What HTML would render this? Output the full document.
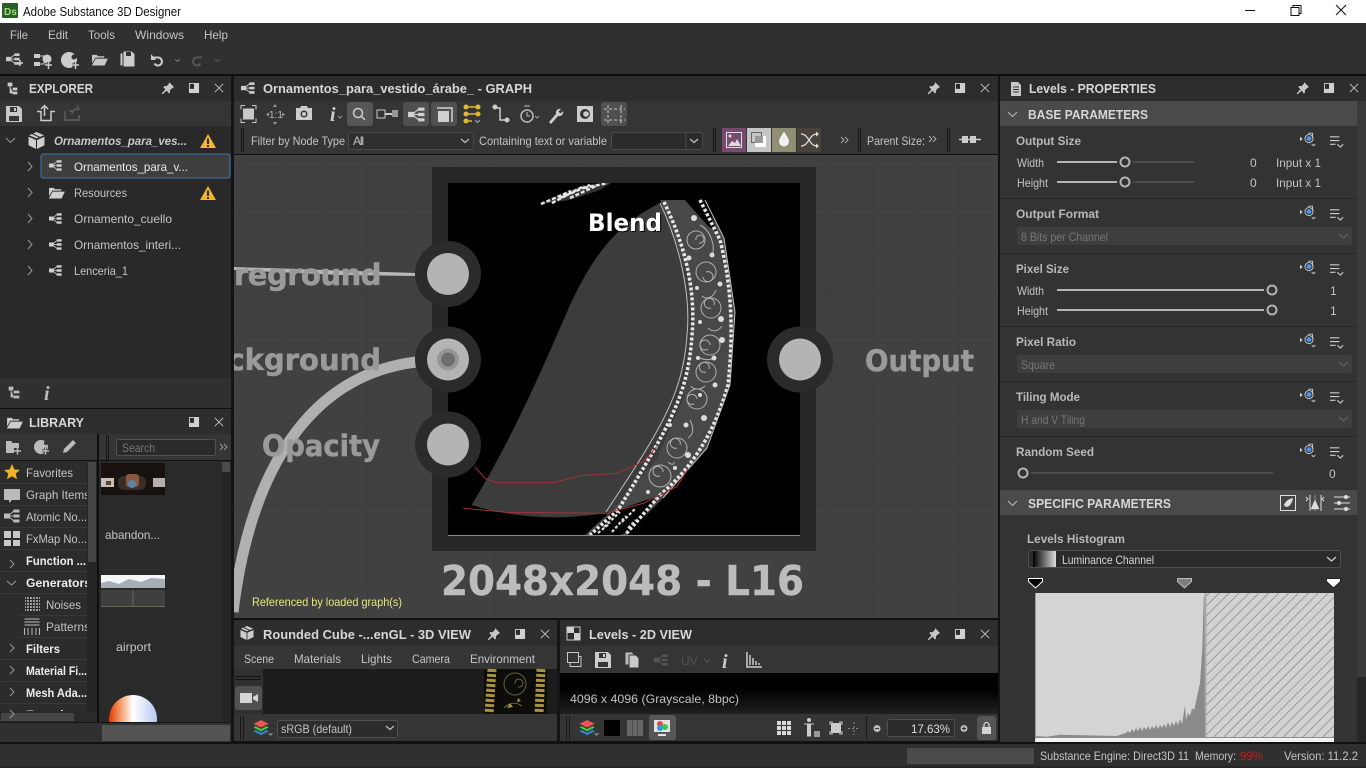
<!DOCTYPE html>
<html><head><meta charset="utf-8"><title>Adobe Substance 3D Designer</title>
<style>
html,body{margin:0;padding:0;background:#2d2d2d;width:1366px;height:768px;overflow:hidden}
svg{display:block;position:absolute;left:0;top:0}
text{font-family:"Liberation Sans",sans-serif;font-size:12px;fill:#c4c4c4;white-space:pre}
.b{font-weight:bold}
.h{font-weight:bold;font-size:13px;fill:#d6d6d6}
.l{font-weight:bold;fill:#b9b9b9}
.d{fill:#767676}
.big{font-family:"DejaVu Sans",sans-serif;font-weight:bold;fill:#9a9a9a}
.i{color:#c8c8c8}
</style></head><body>
<svg width="1366" height="768" viewBox="0 0 1366 768" xmlns="http://www.w3.org/2000/svg">
<defs>
<symbol id="graph" viewBox="0 0 16 16"><path fill="currentColor" d="M0 5.500h6v5H0zM9.500 1.500h6v3h-6zM9.500 6.500h6v3h-6zM9.500 11.500h6v3h-6z"/><path stroke="currentColor" fill="none" d="M5 7L10 3M5 8h5M5 9l5 4"/></symbol>
<symbol id="pin" viewBox="0 0 16 16"><path fill="currentColor" d="M9 1l6 6-2 .8-3 3 .3 2.500-1.300 1L6.500 11 2 15l-1 0 0-1 4-4.500L2.700 7l1-1.300 2.500.3 3-3z"/></symbol>
<symbol id="max" viewBox="0 0 12 12"><path fill="#2b2b2b" stroke="#d0d0d0" d="M1 1h10v10H1z"/><path fill="#d0d0d0" d="M1 1h10v4H6v6H1z" transform="rotate(180 6 6)"/></symbol>
<symbol id="x" viewBox="0 0 12 12"><path stroke="currentColor" fill="none" d="M1 1l10 10M11 1L1 11"/></symbol>
<symbol id="folder" viewBox="0 0 18 14"><path fill="currentColor" d="M1 2h5l1.500 1.500H14V5H4.500L1 11zM4.900 6H18l-3.500 7.500H.8z"/></symbol>
<symbol id="warn" viewBox="0 0 16 14"><path fill="#f4b62a" d="M8 0l8 14H0z"/><path fill="#2a2a2a" d="M7 4.500h2V10H7zM7 11h2v2H7z"/></symbol>
<symbol id="save" viewBox="0 0 16 16"><path fill="currentColor" fill-rule="evenodd" d="M0 0h13l3 3v13H0zM4 1v5h7V1zM3 10v5h10v-5z"/><path fill="currentColor" d="M8 2h2v3H8z"/></symbol>
<symbol id="cube" viewBox="0 0 16 16"><path fill="currentColor" d="M8 0l7 3-7 3-7-3zM.5 4.500l7 3V16l-7-3.500zM15.500 4.500v8L8.500 16V7.500z"/><path stroke="#282828" d="M4 1.500l7 3.500"/></symbol>
<symbol id="set" viewBox="0 0 20 16"><path fill="currentColor" d="M0 5l3 2.500L0 10z"/><circle cx="10" cy="7" r="4.500" fill="none" stroke="#ccc"/><circle cx="10" cy="7" r="2.800" fill="#4b93e6"/><path stroke="#ccc" fill="none" d="M9 1h5v5M13 13l2 2 2-2"/></symbol>
<symbol id="lines" viewBox="0 0 16 16"><path stroke="currentColor" fill="none" stroke-width="1.200" d="M0 3h10M0 7h10M0 11h6M8 11l3 3 3-3"/></symbol>
<symbol id="layers" viewBox="0 0 20 18"><path fill="#e55" d="M8 0l8 4-8 4-8-4z"/><path fill="#4c4" d="M2 6.500L8 9.500l6-3 2 1.500-8 4-8-4z"/><path fill="#38c" d="M2 10.500l6 3 6-3 2 1.500-8 4-8-4z"/><path stroke="#aaa" fill="none" d="M16 14l2 2 2-2"/></symbol>
<pattern id="hatch" width="7" height="7" patternUnits="userSpaceOnUse" patternTransform="rotate(45)"><rect width="7" height="7" fill="#d2d2d2"/><rect width="1" height="7" fill="#9a9a9a"/></pattern>
<pattern id="grid" width="42.200" height="42.200" patternUnits="userSpaceOnUse" x="-12" y="-1"><rect width="42.200" height="42.200" fill="#414141"/><path d="M42 0v42.200M0 42h42.200" stroke="#3b3b3b"/></pattern>
<linearGradient id="g2d" x1="0" y1="0" x2="0" y2="1"><stop offset="0" stop-color="#000"/><stop offset=".4" stop-color="#000"/><stop offset="1" stop-color="#202020"/></linearGradient>
<linearGradient id="lum" x1="0" y1="0" x2="1" y2="0"><stop offset="0" stop-color="#000"/><stop offset="1" stop-color="#ddd"/></linearGradient>
<linearGradient id="sph" x1="0" y1="0" x2="1" y2="0"><stop offset="0" stop-color="#e03a00"/><stop offset=".25" stop-color="#f5a070"/><stop offset=".5" stop-color="#fff"/><stop offset="1" stop-color="#b8c8f0"/></linearGradient>
<clipPath id="cg"><rect x="234" y="155" width="764" height="463"/></clipPath>
<clipPath id="ci"><rect x="448" y="183" width="352" height="352"/></clipPath>
<clipPath id="cl"><rect x="0" y="461" width="87" height="250"/></clipPath>
<clipPath id="cs"><rect x="100" y="690" width="70" height="32"/></clipPath>
</defs>

<!-- base -->
<rect width="1366" height="768" fill="#2e2e2e"/>
<rect width="1366" height="23" fill="#fff"/>
<rect x="2" y="3" width="16" height="15" rx="1" fill="#2b5d2a"/>
<text x="4" y="15" style="font-size:10px;font-weight:bold;fill:#9fe07a">Ds</text>
<text x="23" y="16" textLength="158" lengthAdjust="spacingAndGlyphs" style="font-size:13px;fill:#111">Adobe Substance 3D Designer</text>
<path d="M1245 10.500h10" stroke="#111"/>
<path d="M1291 7.500h8v8h-8zM1293 7.500v-2h8v8h-2" fill="#fff" stroke="#111"/>
<path d="M1336 5l10 10M1346 5l-10 10" stroke="#111"/>

<rect y="23" width="1366" height="51" fill="#303030"/>
<rect y="74" width="1366" height="2" fill="#0e0e0e"/>
<g>
<text x="10" y="39" textLength="18" lengthAdjust="spacingAndGlyphs">File</text><text x="48" y="39" textLength="20" lengthAdjust="spacingAndGlyphs">Edit</text><text x="88" y="39" textLength="27" lengthAdjust="spacingAndGlyphs">Tools</text><text x="135" y="39" textLength="49" lengthAdjust="spacingAndGlyphs">Windows</text><text x="204" y="39" textLength="24" lengthAdjust="spacingAndGlyphs">Help</text>
</g>
<g class="i">
<use href="#graph" x="6" y="52" width="14" height="14"/><path d="M17 63h6M20 60v6" stroke="#ccc" stroke-width="1.500"/>
<path d="M34 54h6v4h-6zM34 62h6v4h-6z" fill="#ccc"/><path d="M40 56h4v8h-4" fill="none" stroke="#ccc"/><circle cx="47" cy="59" r="4.500" fill="#ccc"/><path d="M45 65h7M48.500 62v7" stroke="#303030" stroke-width="3"/><path d="M45 65h7M48.500 62v7" stroke="#ccc" stroke-width="1.500"/>
<circle cx="69" cy="60" r="8" fill="#ccc"/><circle cx="74" cy="57" r="2.500" fill="#303030"/><path d="M72 65h7M75.500 62v7" stroke="#303030" stroke-width="3"/><path d="M72 65h7M75.500 62v7" stroke="#ccc" stroke-width="1.500"/>
<use href="#folder" x="91" y="53" width="17" height="13"/>
<path d="M120 53h9l2 2v11h-11z" fill="#ccc" stroke="#303030"/><path d="M123 51h9l3 3v13h-12z" fill="#ccc" stroke="#303030"/><path d="M126 52h5v4h-5z" fill="#303030"/>
<path d="M152 57.500h6a4 4 0 1 1-3.500 6" fill="none" stroke="#ccc" stroke-width="2"/><path d="M151 54v6h5z" fill="#ccc"/>
<path d="M175 59l2.500 2.500 2.500-2.500" fill="none" stroke="#777"/>
<path d="M202 57.500h-5a4 4 0 1 0 3.500 6" fill="none" stroke="#555" stroke-width="2"/>
<path d="M215 59l2.500 2.500 2.500-2.500" fill="none" stroke="#555"/>
</g>

<!-- Explorer -->
<rect x="0" y="76" width="231" height="25" fill="#2d2d2d"/>
<rect x="0" y="101" width="231" height="25" fill="#353535"/>
<rect x="0" y="126" width="231" height="252" fill="#292929"/>
<rect x="231" y="76" width="3" height="667" fill="#141414"/>
<path d="M8 83h4v3H8zM13 88h4v2h-4zM13 92h4v2h-4zM10 86v7h3" fill="#ccc" stroke="#ccc" stroke-width=".7"/>
<text x="29" y="93" class="h" textLength="64" lengthAdjust="spacingAndGlyphs">EXPLORER</text>
<g class="i"><use href="#pin" x="161" y="81" width="14" height="14"/><use href="#max" x="188.500" y="82.500" width="11" height="11"/><use href="#x" x="214" y="83" width="10" height="10"/></g>
<g class="i"><use href="#save" x="6" y="106" width="16" height="16"/></g>
<path d="M37 112h4v9h10v-9h4" fill="none" stroke="#ccc" stroke-width="1.500" transform="translate(0 -.5)"/><path d="M44.500 116v-9M41 109l3.500-3.500 3.500 3.500" fill="none" stroke="#ccc" stroke-width="1.500"/>
<path d="M65 111v9h14v-5M69 111h5" fill="none" stroke="#555" stroke-width="2"/><path d="M72 114a5 5 0 0 1 6-5M77 105l2 4-4 1" fill="none" stroke="#555" stroke-width="1.500"/>
<path d="M6 138l4.500 4.500L15 138" fill="none" stroke="#999"/>
<use href="#cube" x="28" y="132" width="17" height="17" color="#cfcfcf"/>
<text x="54" y="145" textLength="133" lengthAdjust="spacingAndGlyphs" style="font-weight:bold;font-style:italic;fill:#c8c8c8">Ornamentos_para_ves...</text>
<use href="#warn" x="200" y="134" width="16" height="14"/>
<rect x="41" y="154" width="189" height="24" rx="2" fill="#3e3e3e" stroke="#3a78b0"/>
<g fill="none" stroke="#999"><path d="M28 162l4 4.500-4 4.500M28 188l4 4.500-4 4.500M28 214l4 4.500-4 4.500M28 240l4 4.500-4 4.500M28 266l4 4.500-4 4.500"/></g>
<g color="#cfcfcf"><use href="#graph" x="49" y="159" width="13" height="13"/><use href="#folder" x="48" y="186" width="17" height="13"/><use href="#graph" x="49" y="212" width="13" height="13"/><use href="#graph" x="49" y="238" width="13" height="13"/><use href="#graph" x="49" y="264" width="13" height="13"/></g>
<text x="74" y="171" textLength="114" lengthAdjust="spacingAndGlyphs" style="fill:#ececec">Ornamentos_para_v...</text>
<text x="74" y="197" textLength="53" lengthAdjust="spacingAndGlyphs">Resources</text>
<use href="#warn" x="200" y="186" width="16" height="14"/>
<text x="74" y="223" textLength="98" lengthAdjust="spacingAndGlyphs">Ornamento_cuello</text>
<text x="74" y="249" textLength="107" lengthAdjust="spacingAndGlyphs">Ornamentos_interi...</text>
<text x="74" y="275" textLength="54" lengthAdjust="spacingAndGlyphs">Lenceria_1</text>

<rect x="0" y="378" width="231" height="30" fill="#303030"/>
<rect x="0" y="408" width="231" height="1" fill="#0e0e0e"/>
<path d="M9 387h4v3H9zM14 391h5v2h-5zM14 396h5v2h-5zM11 390v7h3" fill="#bbb" stroke="#bbb" stroke-width=".7"/>
<text x="44" y="400" style="font-family:'Liberation Serif',serif;font-style:italic;font-weight:bold;font-size:20px;fill:#bbb">i</text>

<!-- Library -->
<rect x="0" y="409" width="231" height="25" fill="#2d2d2d"/>
<rect x="0" y="434" width="231" height="27" fill="#353535"/>
<use href="#folder" x="6" y="416" width="17" height="13" color="#ccc"/>
<text x="29" y="427" class="h" textLength="55" lengthAdjust="spacingAndGlyphs">LIBRARY</text>
<g class="i"><use href="#max" x="188.500" y="416.500" width="11" height="11"/><use href="#x" x="214" y="417" width="10" height="10"/></g>
<path d="M6 441h5l1.500 2H19v5h-5v5H6z" fill="#bbb"/><path d="M14 451h7M17.500 447.500v7" stroke="#bbb" stroke-width="1.500"/>
<circle cx="41" cy="447" r="7" fill="#bbb"/><circle cx="46" cy="443" r="2" fill="#353535"/><path d="M42 451h7M45.500 447.500v7" stroke="#353535" stroke-width="3"/><path d="M42 451h7M45.500 447.500v7" stroke="#bbb" stroke-width="1.500"/>
<path d="M63 453l1-4 9-9 3 3-9 9z" fill="#bbb"/>
<rect x="97" y="434" width="2" height="27" fill="#0f0f0f"/>
<path d="M106.500 435v25M108.500 435v25" stroke="#151515"/>
<rect x="116.500" y="439.500" width="99" height="16" rx="2" fill="#2a2a2a" stroke="#505050"/>
<text x="122" y="452" textLength="33" lengthAdjust="spacingAndGlyphs" class="d">Search</text>
<path d="M220 444l3 3-3 3M224 444l3 3-3 3" fill="none" stroke="#999"/>
<rect x="0" y="460" width="231" height="1" fill="#111"/>
<rect x="0" y="461" width="97" height="261" fill="#2c2c2c"/>
<rect x="99" y="461" width="132" height="261" fill="#2a2a2a"/>
<rect x="97" y="461" width="2" height="261" fill="#0f0f0f"/>
<rect x="87" y="461" width="10" height="261" fill="#252525"/>
<rect x="88" y="462" width="8" height="100" fill="#454545"/>
<rect x="0" y="711" width="97" height="11" fill="#2a2a2a"/>
<rect x="1" y="713" width="73" height="8" fill="#454545"/>
<g stroke="#383838"><path d="M0 483.500h87M0 505.500h87M0 527.500h87M0 549.500h87M0 571.500h87M0 593.500h87M20 615.500h67M20 637.500h67M0 659.500h87M0 681.500h87M0 703.500h87"/></g>
<path d="M12 464l2.300 5.400 5.700.5-4.300 3.700 1.300 5.600-5-3-5 3 1.300-5.600L4 470l5.700-.5z" fill="#f0b429"/>
<path d="M5 489h14a1 1 0 0 1 1 1v9a1 1 0 0 1-1 1h-7l-3 3v-3H5a1 1 0 0 1-1-1v-9a1 1 0 0 1 1-1z" fill="#bbb"/>
<use href="#graph" x="4" y="508" width="16" height="16" color="#bbb"/>
<path d="M4 531h7v7H4zM13 531h7v7h-7zM4 540h7v6H4zM13 540h7v6h-7z" fill="#c8c8c8"/>
<path d="M10 562l4 4-4 4M7 583l4.500 4 4.500-4M10 646l4 4-4 4M10 668l4 4-4 4M10 690l4 4-4 4M10 712l4 4-4 4" transform="translate(0 -2)" fill="none" stroke="#999"/>
<g stroke="#9a9a9a" stroke-width="2" stroke-dasharray="2 1"><path d="M25 598h15M25 601h15M25 604h15M25 607h15M25 610h15" stroke-dashoffset="1"/></g>
<path d="M24.500 619h15M24.500 622h15M24.500 625h15M24.500 628v7M28 628v7M32 628v7M36 628v7M39.500 628v7" stroke="#bbb"/>
<g clip-path="url(#cl)">
<text x="26" y="477" textLength="47" lengthAdjust="spacingAndGlyphs">Favorites</text>
<text x="26" y="499" textLength="64" lengthAdjust="spacingAndGlyphs">Graph Items</text>
<text x="26" y="521" textLength="61" lengthAdjust="spacingAndGlyphs">Atomic No...</text>
<text x="26" y="543" textLength="61" lengthAdjust="spacingAndGlyphs">FxMap No...</text>
<text x="26" y="565" textLength="60" lengthAdjust="spacingAndGlyphs" style="font-weight:bold;fill:#eee">Function ...</text>
<text x="26" y="587" textLength="65" lengthAdjust="spacingAndGlyphs" style="font-weight:bold;fill:#eee">Generators</text>
<text x="46" y="609" textLength="35" lengthAdjust="spacingAndGlyphs">Noises</text>
<text x="46" y="631" textLength="44" lengthAdjust="spacingAndGlyphs">Patterns</text>
<text x="26" y="653" textLength="34" lengthAdjust="spacingAndGlyphs" style="font-weight:bold;fill:#eee">Filters</text>
<text x="26" y="675" textLength="61" lengthAdjust="spacingAndGlyphs" style="font-weight:bold;fill:#eee">Material Fi...</text>
<text x="26" y="697" textLength="61" lengthAdjust="spacingAndGlyphs" style="font-weight:bold;fill:#eee">Mesh Ada...</text>
<text x="26" y="719" textLength="60" lengthAdjust="spacingAndGlyphs" style="font-weight:bold;fill:#eee">Functions</text>
</g>
<rect x="101" y="463" width="64" height="32" fill="#17120f"/>
<rect x="101" y="478" width="13" height="9" fill="#c8c0b8"/><rect x="153" y="478" width="12" height="9" fill="#b8b0a8"/><rect x="118" y="476" width="28" height="14" rx="6" fill="#3a2c26"/><rect x="126" y="474" width="13" height="13" rx="3" fill="#8a5a40"/><circle cx="132" cy="484" r="4" fill="#5a86a8"/><rect x="106" y="481" width="5" height="4" fill="#5a4238"/>
<text x="105" y="539" textLength="55" lengthAdjust="spacingAndGlyphs">abandon...</text>
<rect x="101" y="575" width="64" height="13" fill="#f4f5f6"/><path d="M101 583l8-2 10 3 10-5 12 3 10-4 14 1v9h-64z" fill="#a9aeb4"/><rect x="101" y="590" width="64" height="17" fill="#3f3f3e"/><path d="M133 590v17" stroke="#666"/><path d="M101 606.500h64" stroke="#6a6a50"/>
<text x="116" y="651" textLength="35" lengthAdjust="spacingAndGlyphs">airport</text>
<circle cx="133" cy="719" r="24" fill="url(#sph)" clip-path="url(#cs)"/>
<rect x="222" y="461" width="9" height="261" fill="#262626"/><rect x="222" y="462" width="8" height="10" fill="#4a4a4a"/>
<rect x="0" y="722" width="231" height="21" fill="#303030"/>
<rect x="0" y="722" width="231" height="1" fill="#161616"/>
<rect x="102" y="725" width="128" height="16" fill="#545454"/>
<rect x="0" y="742" width="1366" height="2" fill="#111"/>
<rect x="0" y="744" width="1366" height="24" fill="#2f2f2f"/>
<rect x="907" y="748" width="127" height="16" fill="#4a4a4a"/>
<rect x="0" y="766" width="1366" height="2" fill="#242424"/>
<text x="1040" y="760" textLength="149" lengthAdjust="spacingAndGlyphs">Substance Engine: Direct3D 11</text>
<text x="1195" y="760" textLength="41" lengthAdjust="spacingAndGlyphs">Memory:</text>
<text x="1240" y="760" textLength="23" lengthAdjust="spacingAndGlyphs" style="fill:#c81c1c">99%</text>
<text x="1284" y="760" textLength="74" lengthAdjust="spacingAndGlyphs">Version: 11.2.2</text>

<!-- Graph panel -->
<rect x="234" y="76" width="764" height="25" fill="#2d2d2d"/>
<rect x="234" y="101" width="764" height="26" fill="#353535"/>
<rect x="234" y="127" width="764" height="27" fill="#353535"/>
<rect x="234" y="154" width="764" height="1" fill="#111"/>
<rect x="998" y="76" width="2" height="667" fill="#131313"/>
<use href="#graph" x="241" y="81" width="14" height="14" color="#ccc"/>
<text x="263" y="93" class="h" textLength="269" lengthAdjust="spacingAndGlyphs">Ornamentos_para_vestido_árabe_ - GRAPH</text>
<g class="i"><use href="#pin" x="927" y="81" width="14" height="14"/><use href="#max" x="954.500" y="82.500" width="11" height="11"/><use href="#x" x="980" y="83" width="10" height="10"/></g>
<rect x="347" y="102" width="26" height="24" rx="3" fill="#565656"/>
<rect x="403" y="102" width="26" height="24" rx="3" fill="#505050"/>
<rect x="431" y="102" width="26" height="24" rx="3" fill="#505050"/>
<rect x="601" y="102" width="26" height="24" rx="3" fill="#505050"/>
<rect x="243" y="108.500" width="11" height="11" fill="#c8c8c8"/><path d="M241 110v-4h4M252 106h4v4M256 119v4h-4M245 123h-4v-4" transform="translate(0 -.5)" fill="none" stroke="#c8c8c8"/>
<text x="269" y="118" style="font-size:10px;fill:#bbb">1:1</text><path d="M275 104l2 3h-4zM275 125l2-3h-4zM266 114.500l3-2v4zM285 114.500l-3-2v4z" fill="#999"/>
<path d="M296 108h4l1-2h6l1 2h4v12h-16z" fill="#ccc"/><circle cx="304" cy="114" r="3.500" fill="#353535"/><circle cx="304" cy="114" r="2" fill="#ccc"/>
<text x="330" y="121" style="font-family:'Liberation Serif',serif;font-style:italic;font-weight:bold;font-size:20px;fill:#ccc">i</text><path d="M338 116l2 2 2-2" stroke="#999" fill="none"/>
<circle cx="358" cy="113" r="4.500" fill="none" stroke="#ccc" stroke-width="1.500"/><path d="M361 116l4 4" stroke="#ccc" stroke-width="1.500"/>
<path d="M377 110h8v8h-8z" fill="none" stroke="#ccc"/><path d="M385 114h7" stroke="#ccc" stroke-width="2"/><rect x="392" y="110" width="6" height="7" fill="#999"/>
<use href="#graph" x="408" y="106" width="17" height="17" color="#d0d0d0"/>
<path d="M437 108h15v14" fill="none" stroke="#d0d0d0" stroke-width="1.500"/><rect x="438" y="111" width="11" height="11" fill="#d0d0d0"/>
<path d="M466 107h12M466 114h12M466 121h6" stroke="#e0b732" stroke-width="1.500"/><circle cx="466" cy="107" r="2.500" fill="#e0b732"/><circle cx="478" cy="107" r="2.500" fill="#e0b732"/><circle cx="466" cy="114" r="2.500" fill="#e0b732"/><circle cx="478" cy="114" r="2.500" fill="#e0b732"/><circle cx="466" cy="121" r="2.500" fill="#e0b732"/><path d="M475 120l2.500 2.500 2.500-2.500" stroke="#aaa" fill="none"/>
<path d="M495 108h5v12h7" fill="none" stroke="#ccc" stroke-width="1.500"/><circle cx="495" cy="107" r="2.500" fill="#ccc"/><circle cx="507" cy="120" r="2.500" fill="#ccc"/>
<circle cx="527" cy="116" r="6" fill="none" stroke="#bbb" stroke-width="1.500"/><path d="M524 106h6M527 112v4h3" stroke="#bbb" fill="none"/><path d="M535 116l2 2 2-2" stroke="#999" fill="none"/>
<path d="M549 122l7-8a4 4 0 0 1 5-5l-2.500 2.500 2 2 2.500-2.500a4 4 0 0 1-5 5l-7 8z" fill="#ccc"/>
<rect x="577" y="106" width="16" height="16" fill="#ccc"/><rect x="580" y="109" width="10" height="10" rx="5" fill="#333"/><circle cx="586" cy="114" r="2.800" fill="#ccc"/>
<path d="M604 109h21M604 120h21M608 105v19M621 105v19" fill="none" stroke="#c4c4c4" stroke-dasharray="3 2"/>

<path d="M241.500 128v24M243.500 128v24" stroke="#161616"/>
<text x="251" y="145" textLength="94" lengthAdjust="spacingAndGlyphs">Filter by Node Type</text>
<rect x="348.500" y="132.500" width="125" height="17" rx="2" fill="#2f2f2f" stroke="#4a4a4a"/>
<text x="353" y="145" textLength="11">All</text>
<path d="M461 139l4 3.500 4-3.500" fill="none" stroke="#bbb" stroke-width="1.300"/>
<text x="479" y="145" textLength="128" lengthAdjust="spacingAndGlyphs">Containing text or variable</text>
<rect x="611.500" y="132.500" width="91" height="17" rx="2" fill="#2b2b2b" stroke="#4a4a4a"/>
<path d="M686 133v16" stroke="#4a4a4a"/><path d="M690 139l4 3.500 4-3.500" fill="none" stroke="#bbb" stroke-width="1.300"/>
<path d="M713.500 128v24M715.500 128v24" stroke="#161616"/>
<rect x="722" y="128" width="24" height="24" fill="#754c70"/><rect x="747" y="128" width="24" height="24" fill="#c6c6c6"/><rect x="772" y="128" width="24" height="24" fill="#8f8d72"/><rect x="797" y="128" width="24" height="24" fill="#48423a"/>
<path d="M726.500 132.500h15v15h-15z" fill="none" stroke="#ddd"/><path d="M728 146l4-5 3 2 2-4 4 7z" fill="#ddd"/><circle cx="730" cy="136" r="1.500" fill="#ddd"/>
<path d="M751.500 132.500h10v10h-10z" fill="#c6c6c6" stroke="#666"/><rect x="755" y="136" width="11" height="11" fill="#fff"/><rect x="755" y="136" width="8" height="7" fill="#999"/>
<path d="M784 131.500c3 5 5 7 5 10a5 5 0 0 1-10 0c0-3 2-5 5-10z" fill="#f0f0f0"/>
<path d="M801 134c8 0 8 12 16 12M801 146c8 0 8-12 16-12" fill="none" stroke="#ddd" stroke-width="1.200"/><path d="M816 131.500l3 2.500-3 2.500zM816 143.500l3 2.500-3 2.500z" fill="#ddd"/>
<path d="M841 137l3 3-3 3M845 137l3 3-3 3" fill="none" stroke="#aaa"/>
<path d="M858.500 128v24M860.500 128v24" stroke="#161616"/>
<text x="867" y="145" textLength="58" lengthAdjust="spacingAndGlyphs">Parent Size:</text>
<path d="M929 136l3 3-3 3M933 136l3 3-3 3" fill="none" stroke="#aaa"/>
<path d="M947.500 128v24M949.500 128v24" stroke="#161616"/>
<rect x="962" y="136" width="6" height="7" fill="#ccc"/><rect x="970" y="136" width="6" height="7" fill="#ccc"/><path d="M959 139.500h22" stroke="#ccc" stroke-width="1.500"/>

<!-- Graph canvas -->
<g clip-path="url(#cg)">
<rect x="234" y="155" width="764" height="463" fill="url(#grid)"/>
<path d="M234 267L340 270.500 416 273v3L340 275 234 270z" fill="#b8b8b8"/>
<path d="M233 612C250 470 310 375 416 362" fill="none" stroke="#b0b0b0" stroke-width="11"/>
<text x="381" y="285" text-anchor="end" class="big" style="font-size:29px;letter-spacing:-.5px;stroke:#9a9a9a;stroke-width:.5px">Foreground</text>
<text x="381" y="370" text-anchor="end" class="big" style="font-size:29px;stroke:#9a9a9a;stroke-width:.5px">Background</text>
<text x="262" y="456" textLength="118" lengthAdjust="spacingAndGlyphs" class="big" style="font-size:29px;stroke:#9a9a9a;stroke-width:.5px">Opacity</text>
<text x="865" y="371" textLength="109" lengthAdjust="spacingAndGlyphs" class="big" style="font-size:29px;stroke:#9a9a9a;stroke-width:.5px">Output</text>
<rect x="432" y="167" width="384" height="384" fill="#272727"/>
<rect x="448" y="183" width="352" height="352" fill="#000"/>
<g clip-path="url(#ci)">
<path d="M471.500 505C505 450 530 398 570 305 592 258 615 225 660 203L687 260 692 325 683 398 657 458 610 512C560 522 510 517 471.500 505z" fill="#3c3c3c"/>
<path d="M660 200H703L724 238 735 312 730 385 707 448 663 498 627 535H585L610 512 657 458 683 398 692 325 687 272z" fill="#484848"/>
<path d="M684 199H706L717 232 708 226z" fill="#000"/>
<path d="M612 512L655 497 640 528 620 535H590z" fill="#050505"/>
<g fill="none" stroke="#e8e8e8" stroke-width="3.500" stroke-dasharray="3 2">
<path d="M664 202C685 245 696 290 692 335 688 395 670 425 618 510L590 535"/>
<path d="M700 200L720 240C733 290 733 340 728 385 715 430 695 465 660 495L625 535"/>
</g>
<g fill="none" stroke="#bdbdbd" stroke-width="1">
<path d="M660 203C680 245 691 295 687 335 683 395 660 430 606 512"/>
<path d="M705 200L724 238 735 312 730 385 707 448 663 498"/>
</g>
<g fill="none" stroke="#b0b0b0" stroke-width="1">
<circle cx="696" cy="240" r="9"/><circle cx="706" cy="272" r="10"/><circle cx="711" cy="308" r="10"/><circle cx="710" cy="345" r="10"/><circle cx="706" cy="372" r="10"/><circle cx="697" cy="399" r="10"/><circle cx="677" cy="448" r="10"/><circle cx="660" cy="476" r="11"/>
<path d="M696 240a4 4 0 1 1 3 3M706 272a5 5 0 1 1-3 5M711 308a5 5 0 1 1 3-3M710 345a5 5 0 1 0-2 4M706 372a5 5 0 1 1 3-3M697 399a5 5 0 1 0-3 5M677 448a5 5 0 1 1 3-3M660 476a5 5 0 1 1 3-4"/>
<path d="M700 225c10 5 16 20 12 32M716 290c-3 8-10 10-14 6M722 326c-4 6-10 6-14 2M716 358c-6 2-12 2-16 0M705 386c-4 4-12 4-14 0M690 420c4 8 4 14-2 18M668 462c2 2 6 4 6 0"/>
</g>
<g fill="#dcdcdc"><circle cx="689" cy="258" r="2.500"/><circle cx="720" cy="284" r="2.500"/><circle cx="721" cy="319" r="3"/><circle cx="714" cy="358" r="2.500"/><circle cx="722" cy="340" r="3"/><circle cx="704" cy="418" r="3"/><circle cx="686" cy="425" r="2.500"/><circle cx="700" cy="395" r="2"/><circle cx="688" cy="455" r="3"/><circle cx="670" cy="425" r="2"/><circle cx="712" cy="255" r="2.500"/><circle cx="697" cy="288" r="2"/><circle cx="700" cy="322" r="2"/><circle cx="698" cy="358" r="2"/><circle cx="715" cy="385" r="2.500"/><circle cx="675" cy="468" r="2"/><circle cx="648" cy="492" r="2"/><circle cx="694" cy="218" r="3"/></g>
<path d="M541 204L570 190 590 184 611 183 600 190 570 200z" fill="#333"/>
<path d="M541 204l30-13M552 203l32-17M570 198l28-13M584 188l24-5M560 198l30-13" stroke="#e4e4e4" stroke-width="2.500" stroke-dasharray="4 2" fill="none"/>
<path d="M598 533l12-10M612 532l14-16M628 528l8-8M604 527l16-15M622 522l14-14" stroke="#ddd" stroke-width="2.200" stroke-dasharray="3 2" fill="none"/>
<path d="M475 466.700L485 478.300 496.700 482.700H553.300L580 475.700 616.700 473.300 643.300 461.700 656.700 446.700" fill="none" stroke="#a33236"/>
<path d="M463.300 508.300L506.700 512.300 606.700 513.300 643.300 503.300 676.700 486.700 688.300 468.300" fill="none" stroke="#a33236"/>
</g>
<path d="M448 535.500h352" stroke="#8a8a8a"/>
<text x="589" y="232" textLength="74" lengthAdjust="spacingAndGlyphs" class="big" style="font-size:24px;fill:#000">Blend</text>
<text x="588" y="231" textLength="74" lengthAdjust="spacingAndGlyphs" class="big" style="font-size:24px;fill:#fff">Blend</text>
<g fill="#2b2b2b"><circle cx="448" cy="274" r="33"/><circle cx="448" cy="359.500" r="33"/><circle cx="448" cy="444.500" r="33"/><circle cx="800" cy="359.500" r="33"/></g>
<g fill="#b4b4b4"><circle cx="448" cy="274" r="21"/><circle cx="448" cy="359.500" r="21"/><circle cx="448" cy="444.500" r="21"/><circle cx="800" cy="359.500" r="21"/></g>
<circle cx="448" cy="359.500" r="11" fill="#969696"/><circle cx="448" cy="359.500" r="7" fill="#6e6e6e"/>
<text x="441" y="595" textLength="363" lengthAdjust="spacingAndGlyphs" class="big" style="font-size:41px;fill:#bcbcbc;stroke:#bcbcbc;stroke-width:.4px">2048x2048 - L16</text>
<text x="252" y="606" textLength="150" lengthAdjust="spacingAndGlyphs" style="fill:#e6e67c">Referenced by loaded graph(s)</text>
</g>
<rect x="234" y="618" width="764" height="2" fill="#101010"/>

<!-- 3D view -->
<rect x="234" y="620" width="323" height="26" fill="#2d2d2d"/>
<rect x="234" y="646" width="323" height="23" fill="#353535"/>
<rect x="263" y="669" width="294" height="45" fill="#1c1c1c"/>
<rect x="234" y="669" width="29" height="45" fill="#303030"/>
<rect x="234" y="714" width="323" height="27" fill="#353535"/>
<rect x="234" y="741" width="323" height="2" fill="#111"/>
<rect x="557" y="620" width="3" height="123" fill="#141414"/>
<use href="#cube" x="240" y="626" width="14" height="14" color="#ccc"/>
<text x="263" y="639" class="h" textLength="208" lengthAdjust="spacingAndGlyphs">Rounded Cube -...enGL - 3D VIEW</text>
<g class="i"><use href="#pin" x="487" y="627" width="14" height="14"/><use href="#max" x="514.500" y="628.500" width="11" height="11"/><use href="#x" x="540" y="629" width="10" height="10"/></g>
<text x="244" y="663" textLength="30" lengthAdjust="spacingAndGlyphs">Scene</text><text x="294" y="663" textLength="47" lengthAdjust="spacingAndGlyphs">Materials</text><text x="361" y="663" textLength="31" lengthAdjust="spacingAndGlyphs">Lights</text><text x="412" y="663" textLength="38" lengthAdjust="spacingAndGlyphs">Camera</text><text x="470" y="663" textLength="65" lengthAdjust="spacingAndGlyphs">Environment</text>
<path d="M235 676.500h26M235 679.500h26" stroke="#141414"/>
<rect x="235" y="686" width="27" height="24" rx="3" fill="#515151"/>
<path d="M240 693h12v10h-12zM253 697l5-3v8l-5-3z" fill="#d4d4d4"/>
<rect x="484" y="669" width="63" height="45" fill="#0c0c0a"/>
<g fill="none" stroke="#a8923f" stroke-width="9" stroke-dasharray="3 2"><path d="M492 669l-3 45M541 669l-2 45"/></g>
<g fill="none" stroke="#6a6034"><circle cx="515" cy="684" r="11"/><path d="M515 684a4 4 0 1 1 3 3M504 708c6-7 14-5 18-2"/></g>
<path d="M507 708l3-5 3 4zM518 698l3 3-4 1z" fill="#a8923f"/>
<path d="M240.500 716v24M243.500 716v24" stroke="#171717"/>
<use href="#layers" x="253" y="720" width="20" height="17"/>
<rect x="277.500" y="720.500" width="120" height="17" rx="2" fill="#2c2c2c" stroke="#4f4f4f"/>
<text x="281" y="733" textLength="71" lengthAdjust="spacingAndGlyphs">sRGB (default)</text>
<path d="M386 726l4 3.500 4-3.500" fill="none" stroke="#bbb" stroke-width="1.300"/>

<!-- 2D view -->
<rect x="560" y="620" width="438" height="26" fill="#2d2d2d"/>
<rect x="560" y="646" width="438" height="27" fill="#353535"/>
<rect x="560" y="673" width="438" height="41" fill="url(#g2d)"/>
<rect x="560" y="714" width="438" height="27" fill="#353535"/>
<rect x="560" y="741" width="438" height="2" fill="#111"/>
<rect x="567" y="627" width="13" height="13" fill="#2d2d2d" stroke="#ccc"/><rect x="567" y="627" width="7" height="6" fill="#d0d0d0"/><rect x="574" y="633" width="6" height="7" fill="#d0d0d0"/>
<text x="589" y="639" class="h" textLength="103" lengthAdjust="spacingAndGlyphs">Levels - 2D VIEW</text>
<g class="i"><use href="#pin" x="927" y="627" width="14" height="14"/><use href="#max" x="954.500" y="628.500" width="11" height="11"/><use href="#x" x="980" y="629" width="10" height="10"/></g>
<path d="M567.500 652.500h11v10h-11zM570 662.500v4h11v-10h-2" fill="none" stroke="#c8c8c8"/>
<use href="#save" x="595" y="652" width="16" height="16" color="#ccc"/>
<path d="M625 652h7l3 3v10h-10z" fill="#bbb" stroke="#353535"/><path d="M629 655h7l3 3v10h-10z" fill="#c8c8c8" stroke="#353535"/>
<use href="#graph" x="654" y="653" width="14" height="14" color="#555"/>
<text x="681" y="665" style="fill:#555">UV</text><path d="M704 659l3 3 3-3" stroke="#555" fill="none"/>
<text x="722" y="668" style="font-family:'Liberation Serif',serif;font-style:italic;font-weight:bold;font-size:20px;fill:#ccc">i</text>
<path d="M747 652v15h15M750 655v10M753 658v7M756 661v4M759 663v2" fill="none" stroke="#ccc" stroke-width="1.500"/>
<text x="570" y="703" textLength="169" lengthAdjust="spacingAndGlyphs" style="fill:#c0c0c0">4096 x 4096 (Grayscale, 8bpc)</text>
<path d="M566.500 716v24M569.500 716v24" stroke="#171717"/>
<use href="#layers" x="579" y="720" width="20" height="17"/>
<rect x="604" y="720" width="16" height="16" fill="#000"/>
<path d="M627 720h5v16h-5zM632.500 720h5v16h-5zM638 720h5v16h-5z" fill="#666"/>
<rect x="649" y="715" width="27" height="25" rx="3" fill="#575757"/>
<rect x="654" y="720" width="16" height="12" fill="#e4e4e4"/><circle cx="660" cy="724" r="3" fill="#e44"/><circle cx="665" cy="727" r="3" fill="#3c4"/><circle cx="660" cy="728" r="3" fill="#39d"/><path d="M658 735h8" stroke="#e4e4e4" stroke-width="2"/>
<path d="M777 721h4v4h-4zM782 721h4v4h-4zM787 721h4v4h-4zM777 726h4v4h-4zM782 726h4v4h-4zM787 726h4v4h-4zM777 731h4v4h-4zM782 731h4v4h-4zM787 731h4v4h-4z" fill="#d8d8d8"/>
<circle cx="809" cy="720" r="2" fill="#ccc"/><path d="M804 724h10M807.500 724h3v12h-3z" fill="#ccc" stroke="#ccc"/><rect x="814" y="731" width="6" height="6" fill="#999"/>
<rect x="831" y="723" width="10" height="10" fill="#ccc"/><path d="M830 725v-3h3M839 722h3v3M842 731v3h-3M833 734h-3v-3" fill="none" stroke="#ccc"/>
<path d="M854 722v13M848 728.500h12" stroke="#888" stroke-dasharray="2 2"/>
<path d="M866.500 716v24" stroke="#1c1c1c"/>
<circle cx="877" cy="728.500" r="3.500" fill="#bbb"/><path d="M875 728.500h4" stroke="#333"/>
<rect x="887.500" y="719.500" width="67" height="17" rx="2" fill="#2c2c2c" stroke="#4f4f4f"/>
<text x="911" y="733" textLength="39" lengthAdjust="spacingAndGlyphs" style="fill:#ddd">17.63%</text>
<circle cx="964" cy="728.500" r="3.500" fill="#bbb"/><path d="M962 728.500h4M964 726.500v4" stroke="#333"/>
<rect x="977" y="716" width="19" height="24" rx="3" fill="#555"/>
<rect x="982" y="727" width="9" height="7" fill="#d4d4d4"/><path d="M984 727v-2a2.500 2.500 0 0 1 5 0v2" fill="none" stroke="#d4d4d4" stroke-width="1.300"/>

<!-- Properties -->
<rect x="1000" y="76" width="366" height="25" fill="#2d2d2d"/>
<rect x="1000" y="101" width="357" height="641" fill="#333"/>
<rect x="1357" y="101" width="9" height="641" fill="#262626"/>
<rect x="1357" y="101" width="9" height="576" fill="#3a3a3a"/>
<path d="M1011 82h7l3 3v11h-10z" fill="#c8c8c8"/><path d="M1013 87h6M1013 89.500h6M1013 92h6" stroke="#333"/>
<text x="1029" y="93" class="h" textLength="127" lengthAdjust="spacingAndGlyphs">Levels - PROPERTIES</text>
<g class="i"><use href="#pin" x="1296" y="81" width="14" height="14"/><use href="#max" x="1323.500" y="82.500" width="11" height="11"/><use href="#x" x="1349" y="83" width="10" height="10"/></g>
<rect x="1000" y="101" width="357" height="25" fill="#4a4a4a"/>
<rect x="1000" y="490" width="357" height="25" fill="#4a4a4a"/>
<path d="M1008 112l4.500 4.500 4.500-4.500M1008 501l4.500 4.500 4.500-4.500" fill="none" stroke="#bbb"/>
<text x="1028" y="119" class="h" textLength="120" lengthAdjust="spacingAndGlyphs">BASE PARAMETERS</text>
<text x="1028" y="508" class="h" textLength="143" lengthAdjust="spacingAndGlyphs">SPECIFIC PARAMETERS</text>
<path d="M1000 198.500h357M1000 253.500h357M1000 326.500h357M1000 381.500h357M1000 436.500h357" stroke="#272727"/>

<text x="1016" y="145" class="l" textLength="65" lengthAdjust="spacingAndGlyphs">Output Size</text>
<text x="1017" y="167" textLength="27" lengthAdjust="spacingAndGlyphs">Width</text>
<text x="1017" y="187" textLength="31" lengthAdjust="spacingAndGlyphs">Height</text>
<path d="M1057 162h60M1057 182h60" stroke="#b4b4b4" stroke-width="2"/><path d="M1133 162h61M1133 182h61" stroke="#4c4c4c" stroke-width="2"/>
<g fill="#333" stroke="#b4b4b4" stroke-width="2"><circle cx="1125" cy="162" r="4.500"/><circle cx="1125" cy="182" r="4.500"/></g>
<text x="1250" y="167">0</text><text x="1250" y="187">0</text>
<text x="1276" y="167" textLength="45" lengthAdjust="spacingAndGlyphs">Input x 1</text><text x="1276" y="187" textLength="45" lengthAdjust="spacingAndGlyphs">Input x 1</text>

<text x="1016" y="218" class="l" textLength="83" lengthAdjust="spacingAndGlyphs">Output Format</text>
<rect x="1017" y="227" width="335" height="18" rx="2" fill="#3e3e3e"/>
<text x="1021" y="241" class="d" textLength="87" lengthAdjust="spacingAndGlyphs">8 Bits per Channel</text>
<path d="M1339 234l4.500 4 4.500-4" fill="none" stroke="#5f5f5f" stroke-width="1.300"/>

<text x="1016" y="273" class="l" textLength="53" lengthAdjust="spacingAndGlyphs">Pixel Size</text>
<text x="1017" y="295" textLength="27" lengthAdjust="spacingAndGlyphs">Width</text>
<text x="1017" y="315" textLength="31" lengthAdjust="spacingAndGlyphs">Height</text>
<path d="M1057 290h207M1057 310h207" stroke="#b4b4b4" stroke-width="2"/>
<g fill="#333" stroke="#b4b4b4" stroke-width="2"><circle cx="1272" cy="290" r="4.500"/><circle cx="1272" cy="310" r="4.500"/></g>
<text x="1330" y="295">1</text><text x="1330" y="315">1</text>

<text x="1016" y="346" class="l" textLength="60" lengthAdjust="spacingAndGlyphs">Pixel Ratio</text>
<rect x="1017" y="355" width="335" height="18" rx="2" fill="#3e3e3e"/>
<text x="1021" y="369" class="d" textLength="34" lengthAdjust="spacingAndGlyphs">Square</text>
<path d="M1339 362l4.500 4 4.500-4" fill="none" stroke="#5f5f5f" stroke-width="1.300"/>

<text x="1016" y="401" class="l" textLength="64" lengthAdjust="spacingAndGlyphs">Tiling Mode</text>
<rect x="1017" y="410" width="335" height="18" rx="2" fill="#3e3e3e"/>
<text x="1021" y="424" class="d" textLength="64" lengthAdjust="spacingAndGlyphs">H and V Tiling</text>
<path d="M1339 417l4.500 4 4.500-4" fill="none" stroke="#5f5f5f" stroke-width="1.300"/>

<text x="1016" y="456" class="l" textLength="78" lengthAdjust="spacingAndGlyphs">Random Seed</text>
<path d="M1031 473h242" stroke="#4c4c4c" stroke-width="2"/>
<circle cx="1023" cy="473" r="4.500" fill="#333" stroke="#b4b4b4" stroke-width="2"/>
<text x="1329" y="478">0</text>

<g color="#ccc">
<use href="#set" x="1300" y="132" width="18" height="15"/><use href="#lines" x="1330" y="134" width="15" height="15"/>
<use href="#set" x="1300" y="205" width="18" height="15"/><use href="#lines" x="1330" y="207" width="15" height="15"/>
<use href="#set" x="1300" y="260" width="18" height="15"/><use href="#lines" x="1330" y="262" width="15" height="15"/>
<use href="#set" x="1300" y="333" width="18" height="15"/><use href="#lines" x="1330" y="335" width="15" height="15"/>
<use href="#set" x="1300" y="388" width="18" height="15"/><use href="#lines" x="1330" y="390" width="15" height="15"/>
<use href="#set" x="1300" y="443" width="18" height="15"/><use href="#lines" x="1330" y="445" width="15" height="15"/>
</g>
<rect x="1280.500" y="495.500" width="15" height="15" fill="#444" stroke="#ddd"/><path d="M1283 508c1-6 5-9 10-10-1 6-4 9-7 9l-2-2z" fill="#ddd"/>
<path d="M1315 495v16M1311 509l4-9 4 9z" fill="#ddd" stroke="#ddd" stroke-width=".5"/><path d="M1306 497l2 2-2 2M1324 497l-2 2 2 2M1321 495v16" fill="none" stroke="#ddd"/><path d="M1310 495v16" stroke="#ddd"/>
<path d="M1334 497h16M1334 503h16M1334 509h16" stroke="#ddd"/><circle cx="1346" cy="497" r="2" fill="#ddd"/><circle cx="1339" cy="503" r="2" fill="#ddd"/><circle cx="1346" cy="509" r="2" fill="#ddd"/>

<text x="1027" y="543" class="l" textLength="98" lengthAdjust="spacingAndGlyphs">Levels Histogram</text>
<rect x="1028.500" y="550.500" width="312" height="17" rx="2" fill="#2b2b2b" stroke="#4f4f4f"/>
<rect x="1033" y="551" width="23" height="16" fill="url(#lum)"/>
<text x="1062" y="564" textLength="92" lengthAdjust="spacingAndGlyphs" style="fill:#d8d8d8">Luminance Channel</text>
<path d="M1327 557l4.500 4 4.500-4" fill="none" stroke="#ccc" stroke-width="1.300"/>
<path d="M1028.500 578.500h14v3l-7 6.500-7-6.500z" fill="#000" stroke="#fff"/>
<path d="M1177.500 578.500h14v3l-7 6.500-7-6.500z" fill="#7e7e7e" stroke="#bbb"/>
<path d="M1326.500 578.500h14v3l-7 6.500-7-6.500z" fill="#fff" stroke="#222"/>
<rect x="1035" y="593" width="172" height="149" fill="#d4d4d4"/>
<rect x="1206" y="593" width="128" height="149" fill="url(#hatch)"/>
<path d="M1205.500 593v145" stroke="#aaa" stroke-width="2"/>
<path d="M1035.700 737.300V736L1046.700 736.700 1060 734.700 1116.700 736 1126 733 1128 731 1130 733 1132 729 1134 732 1136 728 1138 731 1140 727 1142 731 1144 727 1146 730 1148 726 1150 730 1152 726 1154 729 1156 725 1158 729 1160 725 1162 728 1164 724 1166 728 1168 722 1170 727 1172 722 1174 726 1176 721 1178 725 1180 719 1182 724 1183 718 1185 705 1186 720 1188 713 1190 716 1192 708 1194 710 1196 702 1198 692 1200 683 1202.300 650 1203.700 596.700 1204.300 596.700 1205 737.300z" fill="#8a8a8a"/>
<path d="M1035 737.500h299" stroke="#8e8e8e"/>
<rect x="1035" y="738" width="299" height="4" fill="#f2f2f2"/>
<rect x="1035" y="593" width="1" height="146" fill="#9a9a9a"/>
</svg>
</body></html>
